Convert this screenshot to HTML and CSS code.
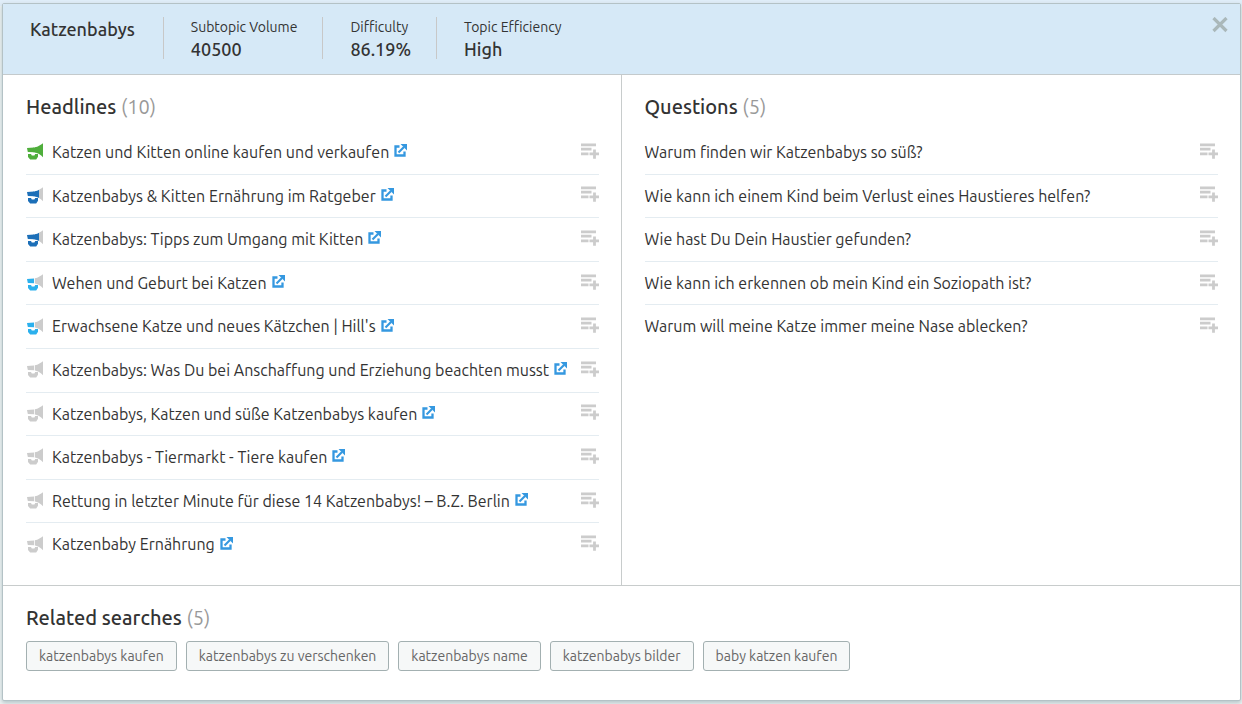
FILE: index.html
```html
<!DOCTYPE html>
<html lang="de">
<head>
<meta charset="utf-8">
<meta name="viewport" content="width=device-width, initial-scale=1">
<title>Katzenbabys</title>
<link rel="stylesheet" href="styles.css">
</head>
<body>
<svg class="sprite" aria-hidden="true">
  <symbol id="horn" viewBox="0 0 18 17">
    <path class="horn-base" d="M1 5 8 4.400V9.300L1.800 9Z"/>
    <path class="horn-base" d="M2 11h3l.8 1.500h2.600l.8-1.500H12v2.800L10.200 16.500H4.200L2 14Z"/>
    <path class="horn-gap" d="M7.500 4.450h2V9.600L7.500 9.300Z"/>
    <path class="horn-mid" d="M8.800 4.300C10.500 4 12 3.400 13 2.700v8.400C12 10.400 10.500 9.800 8.800 9.500Z"/>
    <path class="horn-end" d="M13 2.700C14.500 2 16 1.200 17 .2v14C16 13 14.500 12 13 11.100Z"/>
  </symbol>
  <symbol id="out" viewBox="0 0 13 13">
    <path d="M5.500 2.500H1.500v9H10.500V7.500" fill="none" stroke="currentColor" stroke-width="2.300"/>
    <path d="M4.500 8.500 10 3" fill="none" stroke="currentColor" stroke-width="2.200"/>
    <path d="M6.500 0H13v6.500Z" fill="currentColor"/>
  </symbol>
  <symbol id="add" viewBox="0 0 18 16">
    <path d="M0 1.800h15M0 6.200h10.500M0 10.800h7.500M8.500 10.800H18M13.500 6.500v9.200" fill="none" stroke="currentColor" stroke-width="2.800"/>
  </symbol>
</svg>
<main class="card">
  <header class="card-head">
    <h1 class="topic">Katzenbabys</h1>
    <dl class="stats">
      <div class="stat"><dt>Subtopic Volume</dt><dd>40500</dd></div>
      <div class="stat"><dt>Difficulty</dt><dd>86.19%</dd></div>
      <div class="stat"><dt>Topic Efficiency</dt><dd>High</dd></div>
    </dl>
    <button class="close" type="button" aria-label="Close"><svg class="close-icon" viewBox="0 0 16 16"><path d="M1.500 1 14.500 14M14.500 1 1.500 14" fill="none" stroke="currentColor" stroke-width="3.200"/></svg></button>
  </header>
  <div class="columns">
    <section class="column">
      <h2 class="title">Headlines <span class="count">(10)</span></h2>
      <ul class="list">
        <li class="row"><svg class="horn level-4"><use href="#horn"/></svg><span class="text">Katzen und Kitten online kaufen und verkaufen</span><a class="out" href="#" aria-label="Open"><svg class="out-icon"><use href="#out"/></svg></a><button class="add" type="button" aria-label="Add"><svg class="add-icon"><use href="#add"/></svg></button></li>
        <li class="row"><svg class="horn level-3"><use href="#horn"/></svg><span class="text">Katzenbabys &amp; Kitten Ernährung im Ratgeber</span><a class="out" href="#" aria-label="Open"><svg class="out-icon"><use href="#out"/></svg></a><button class="add" type="button" aria-label="Add"><svg class="add-icon"><use href="#add"/></svg></button></li>
        <li class="row"><svg class="horn level-3"><use href="#horn"/></svg><span class="text">Katzenbabys: Tipps zum Umgang mit Kitten</span><a class="out" href="#" aria-label="Open"><svg class="out-icon"><use href="#out"/></svg></a><button class="add" type="button" aria-label="Add"><svg class="add-icon"><use href="#add"/></svg></button></li>
        <li class="row"><svg class="horn level-2"><use href="#horn"/></svg><span class="text">Wehen und Geburt bei Katzen</span><a class="out" href="#" aria-label="Open"><svg class="out-icon"><use href="#out"/></svg></a><button class="add" type="button" aria-label="Add"><svg class="add-icon"><use href="#add"/></svg></button></li>
        <li class="row"><svg class="horn level-2"><use href="#horn"/></svg><span class="text">Erwachsene Katze und neues Kätzchen | Hill's</span><a class="out" href="#" aria-label="Open"><svg class="out-icon"><use href="#out"/></svg></a><button class="add" type="button" aria-label="Add"><svg class="add-icon"><use href="#add"/></svg></button></li>
        <li class="row"><svg class="horn"><use href="#horn"/></svg><span class="text">Katzenbabys: Was Du bei Anschaffung und Erziehung beachten musst</span><a class="out" href="#" aria-label="Open"><svg class="out-icon"><use href="#out"/></svg></a><button class="add" type="button" aria-label="Add"><svg class="add-icon"><use href="#add"/></svg></button></li>
        <li class="row"><svg class="horn"><use href="#horn"/></svg><span class="text">Katzenbabys, Katzen und süße Katzenbabys kaufen</span><a class="out" href="#" aria-label="Open"><svg class="out-icon"><use href="#out"/></svg></a><button class="add" type="button" aria-label="Add"><svg class="add-icon"><use href="#add"/></svg></button></li>
        <li class="row"><svg class="horn"><use href="#horn"/></svg><span class="text">Katzenbabys - Tiermarkt - Tiere kaufen</span><a class="out" href="#" aria-label="Open"><svg class="out-icon"><use href="#out"/></svg></a><button class="add" type="button" aria-label="Add"><svg class="add-icon"><use href="#add"/></svg></button></li>
        <li class="row"><svg class="horn"><use href="#horn"/></svg><span class="text">Rettung in letzter Minute für diese 14 Katzenbabys! – B.Z. Berlin</span><a class="out" href="#" aria-label="Open"><svg class="out-icon"><use href="#out"/></svg></a><button class="add" type="button" aria-label="Add"><svg class="add-icon"><use href="#add"/></svg></button></li>
        <li class="row"><svg class="horn"><use href="#horn"/></svg><span class="text">Katzenbaby Ernährung</span><a class="out" href="#" aria-label="Open"><svg class="out-icon"><use href="#out"/></svg></a><button class="add" type="button" aria-label="Add"><svg class="add-icon"><use href="#add"/></svg></button></li>
      </ul>
    </section>
    <section class="column">
      <h2 class="title">Questions <span class="count">(5)</span></h2>
      <ul class="list">
        <li class="row"><span class="text">Warum finden wir Katzenbabys so süß?</span><button class="add" type="button" aria-label="Add"><svg class="add-icon"><use href="#add"/></svg></button></li>
        <li class="row"><span class="text">Wie kann ich einem Kind beim Verlust eines Haustieres helfen?</span><button class="add" type="button" aria-label="Add"><svg class="add-icon"><use href="#add"/></svg></button></li>
        <li class="row"><span class="text">Wie hast Du Dein Haustier gefunden?</span><button class="add" type="button" aria-label="Add"><svg class="add-icon"><use href="#add"/></svg></button></li>
        <li class="row"><span class="text">Wie kann ich erkennen ob mein Kind ein Soziopath ist?</span><button class="add" type="button" aria-label="Add"><svg class="add-icon"><use href="#add"/></svg></button></li>
        <li class="row"><span class="text">Warum will meine Katze immer meine Nase ablecken?</span><button class="add" type="button" aria-label="Add"><svg class="add-icon"><use href="#add"/></svg></button></li>
      </ul>
    </section>
  </div>
  <section class="related">
    <h2 class="title">Related searches <span class="count">(5)</span></h2>
    <div class="tags">
      <button class="tag" type="button">katzenbabys kaufen</button>
      <button class="tag" type="button">katzenbabys zu verschenken</button>
      <button class="tag" type="button">katzenbabys name</button>
      <button class="tag" type="button">katzenbabys bilder</button>
      <button class="tag" type="button">baby katzen kaufen</button>
    </div>
  </section>
</main>
</body>
</html>
```
FILE: styles.css
```css
* {
  box-sizing: border-box;
}

body {
  margin: 0;
  padding: 3px 1px 3px 2px;
  background: linear-gradient(#e0edf8 6px, #edf2f2 6px);
  color: #333;
  font-family: Ubuntu, "Noto Sans", sans-serif;
  font-size: 16px;
}

h1, h2, dl, dd, ul {
  margin: 0;
  padding: 0;
}

button {
  font: inherit;
  cursor: pointer;
}

.sprite {
  position: absolute;
  width: 0;
  height: 0;
}

.card {
  border: 1px solid #b4c2c6;
  border-radius: 2px;
  background: #fff;
  box-shadow: 0 2px 4px #b4c4c8;
}

.card-head {
  display: flex;
  align-items: flex-start;
  min-height: 71px;
  padding: 13px 12px 15px 27px;
  border-bottom: 1px solid #c4cacc;
  background: #d6e9f7;
}

.topic {
  padding-right: 28px;
  font-size: 18px;
  font-weight: 500;
  line-height: 24px;
}

.stats {
  display: flex;
  flex: 1;
}

.stat {
  height: 42px;
  padding: 0 25px 0 27px;
  border-left: 1px solid #c8c8c8;
}

.stat dt {
  font-size: 14px;
  line-height: 20px;
}

.stat dd {
  font-size: 18px;
  font-weight: 500;
  line-height: 24px;
}

.close {
  display: flex;
  padding: 0;
  border: 0;
  background: none;
  color: #aab8ba;
}

.close-icon {
  width: 16px;
  height: 16px;
}

.columns {
  display: grid;
  grid-template-columns: 1fr 1fr;
  border-bottom: 1px solid #c8cccc;
}

.column {
  padding: 19px 22px 19px 23px;
}

.column:first-child {
  border-right: 1px solid #c8cccc;
}

.column:first-child .text {
  padding-left: 8px;
}

.title {
  font-size: 20px;
  font-weight: 500;
  line-height: 26px;
}

.count {
  color: #999;
  font-weight: 400;
}

.list {
  margin-top: 11px;
  list-style: none;
}

.row {
  display: flex;
  align-items: center;
  padding: 11px 0 10px;
  border-bottom: 1px solid #e4ecf1;
  line-height: 1.35;
}

.row:last-child {
  border-bottom: 0;
}

.horn {
  flex: none;
  width: 18px;
  height: 17px;
  margin-bottom: 2px;
  --base: #ccc;
  --gap: none;
  --mid: #ccc;
  --end: #ccc;
}

.horn-base {
  fill: var(--base);
}

.horn-gap {
  fill: var(--gap);
}

.horn-mid {
  fill: var(--mid);
}

.horn-end {
  fill: var(--end);
}

.level-4 {
  --base: #4fae3c;
  --gap: #4fae3c;
  --mid: #4fae3c;
  --end: #4fae3c;
}

.level-3 {
  --base: #1c6fb8;
  --gap: #1c6fb8;
  --mid: #1c6fb8;
}

.level-2 {
  --base: #2bb0ed;
}

.out {
  display: flex;
  margin: 0 5px 4px;
  color: #3598e0;
}

.out-icon {
  width: 13px;
  height: 13px;
}

.add {
  display: flex;
  margin: 0 0 4px auto;
  padding: 0;
  border: 0;
  background: none;
  color: #ccc;
}

.add-icon {
  width: 18px;
  height: 16px;
}

.related {
  padding: 19px 23px 29px;
}

.tags {
  display: flex;
  flex-wrap: wrap;
  gap: 9px;
  margin-top: 10px;
}

.tag {
  padding: 4px 12px;
  border: 1px solid #a3b0b1;
  border-radius: 3px;
  background: #f6f8f8;
  color: #666;
  font-size: 14px;
  line-height: 20px;
}
```
